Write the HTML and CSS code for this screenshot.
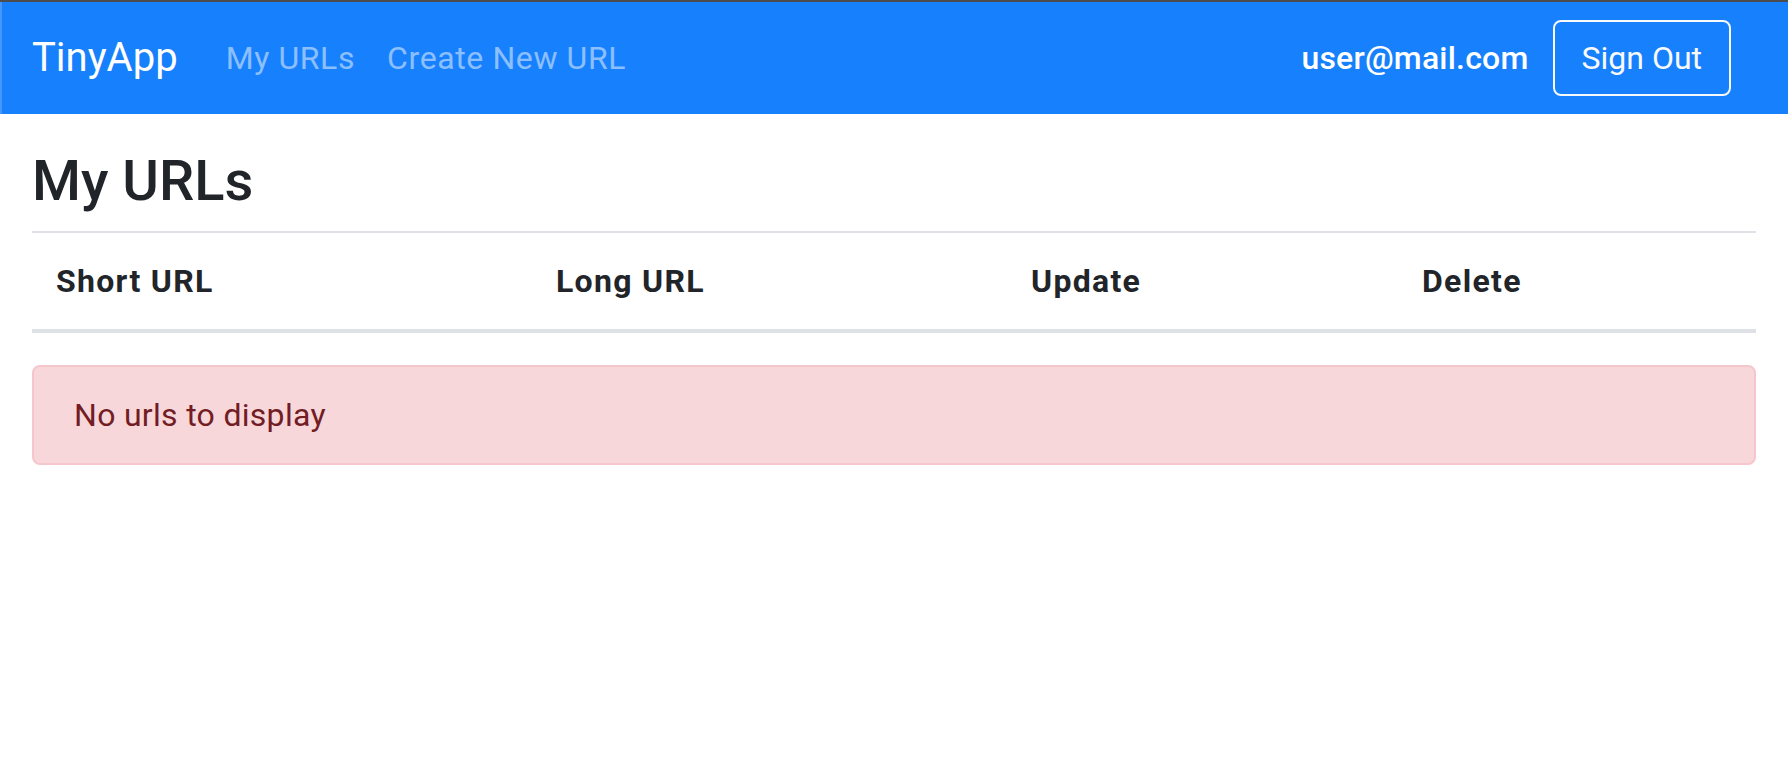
FILE: index.html
```html
<!DOCTYPE html>
<html lang="en">
<head>
<meta charset="utf-8">
<title>TinyApp</title>
<link rel="stylesheet" href="styles.css">
</head>
<body>
<nav class="navbar">
  <a class="brand" href="#">TinyApp</a>
  <div class="nav-links">
    <a class="nav-link" href="#">My URLs</a>
    <a class="nav-link" href="#">Create New URL</a>
  </div>
  <div class="nav-right">
    <span class="user">user@mail.com</span>
    <button class="btn-outline">Sign Out</button>
  </div>
</nav>
<main class="content">
  <h3 class="title">My URLs</h3>
  <table class="table">
    <thead>
      <tr>
        <th class="c1">Short URL</th>
        <th class="c2">Long URL</th>
        <th class="c3">Update</th>
        <th class="c4">Delete</th>
      </tr>
    </thead>
  </table>
  <div class="alert">No urls to display</div>
</main>
</body>
</html>
```
FILE: styles.css
```css
* { box-sizing: border-box; }
html, body { margin: 0; padding: 0; }
body {
  font-family: Roboto, "Liberation Sans", Arial, sans-serif;
  color: #212529;
  background: #fff;
  border-top: 2px solid #4d4d4f;
}
.navbar {
  display: flex;
  align-items: center;
  height: 112px;
  padding: 0 57px 0 32px;
  background: #1780fd;
  box-shadow: inset 2px 0 0 #4696fd;
}
.brand {
  font-size: 40px;
  line-height: 60px;
  padding: 10px 0;
  margin-right: 32px;
  color: #fff;
  text-decoration: none;
}
.nav-links { display: flex; }
.nav-link {
  font-size: 32px;
  line-height: 48px;
  padding: 16px;
  letter-spacing: 0.6px;
  color: rgba(255, 255, 255, 0.5);
  text-decoration: none;
}
.nav-right {
  margin-left: auto;
  display: flex;
  align-items: center;
  gap: 24px;
}
.user {
  font-size: 32px;
  font-weight: 500;
  letter-spacing: 0.2px;
  color: #fff;
  line-height: 48px;
}
.btn-outline {
  font-family: inherit;
  font-size: 32px;
  line-height: 48px;
  padding: 12px 27px;
  color: #f8f9fa;
  background: transparent;
  border: 2px solid #f8f9fa;
  border-radius: 8px;
}
.content {
  padding: 34px 32px 0;
}
.title {
  font-size: 56px;
  font-weight: 500;
  line-height: 1.2;
  margin: 0 0 16px;
}
.table {
  width: 100%;
  border-collapse: collapse;
  margin-bottom: 32px;
  table-layout: fixed;
}
.table th {
  text-align: left;
  font-size: 32px;
  font-weight: 700;
  line-height: 48px;
  letter-spacing: 1.3px;
  padding: 24px;
  border-top: 2px solid #dee2e6;
  border-bottom: 4px solid #dee2e6;
}
.c1 { width: 500px; }
.c2 { width: 475px; }
.c3 { width: 391px; }
.c4 { width: 358px; }
.alert {
  font-size: 32px;
  line-height: 48px;
  padding: 24px 40px;
  letter-spacing: 0.3px;
  color: #721c24;
  background: #f8d7da;
  border: 2px solid #f5c6cb;
  border-radius: 8px;
}
```
